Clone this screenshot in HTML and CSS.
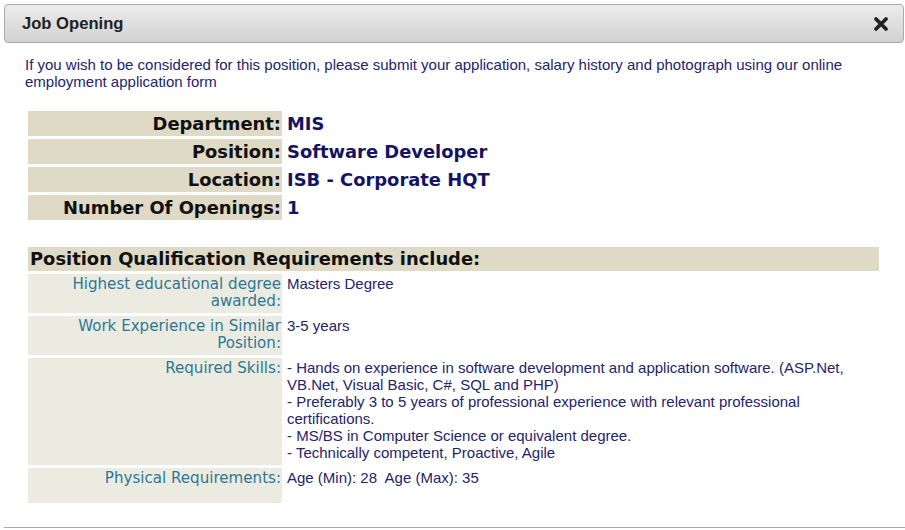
FILE: index.html
```html
<!DOCTYPE html>
<html lang="en">
<head>
    <meta charset="UTF-8">
    <title>Job Opening</title>
    <link rel="stylesheet" href="styles.css">
</head>
<body>
    <div class="dialog">
        <div class="titlebar">
            <span class="title">Job Opening</span>
            <span class="close-btn">
                <svg width="16" height="16" viewBox="0 0 16 16"><path d="M3 3 L13 13 M13 3 L3 13" stroke="#222" stroke-width="3.8" stroke-linecap="round"/></svg>
            </span>
        </div>
        <div class="content">
            <p class="intro">If you wish to be considered for this position, please submit your application, salary history and photograph using our online employment application form</p>
            <table class="job-table">
                <tr class="main">
                    <th>Department:</th>
                    <td>MIS</td>
                </tr>
                <tr class="main">
                    <th>Position:</th>
                    <td>Software Developer</td>
                </tr>
                <tr class="main">
                    <th>Location:</th>
                    <td>ISB - Corporate HQT</td>
                </tr>
                <tr class="main">
                    <th>Number Of Openings:</th>
                    <td>1</td>
                </tr>
                <tr class="spacer"><td colspan="2"></td></tr>
                <tr class="section">
                    <td colspan="2">Position Qualification Requirements include:</td>
                </tr>
                <tr class="req r-degree">
                    <th>Highest educational degree awarded:</th>
                    <td>Masters Degree</td>
                </tr>
                <tr class="req r-exp">
                    <th>Work Experience in Similar Position:</th>
                    <td>3-5 years</td>
                </tr>
                <tr class="req r-skills">
                    <th>Required Skills:</th>
                    <td>- Hands on experience in software development and application software. (ASP.Net, VB.Net, Visual Basic, C#, SQL and PHP)<br>- Preferably 3 to 5 years of professional experience with relevant professional certifications.<br>- MS/BS in Computer Science or equivalent degree.<br>- Technically competent, Proactive, Agile</td>
                </tr>
                <tr class="req r-phys">
                    <th>Physical Requirements:</th>
                    <td>Age (Min): 28&nbsp; Age (Max): 35</td>
                </tr>
            </table>
        </div>
        <div class="footer"></div>
    </div>
</body>
</html>
```

FILE: styles.css
```css
body {
    margin: 0;
    background: #fff;
    font-family: "Liberation Sans", Arial, sans-serif;
}
.dialog {
    padding: 4px 0 0 4px;
}
.titlebar {
    display: flex;
    align-items: center;
    justify-content: space-between;
    height: 37px;
    margin-right: 1px;
    padding: 0 14px 0 17px;
    border: 1px solid #aaa;
    border-radius: 4px;
    background: linear-gradient(#ececec, #d2d2d2);
}
.title {
    font-size: 16.6px;
    font-weight: bold;
    color: #222;
}
.close-btn {
    display: flex;
}
.content {
    padding: 13px 19px 0 21px;
}
.intro {
    margin: 0;
    font-size: 15px;
    line-height: 17px;
    color: #23236e;
}
.job-table {
    width: 857px;
    margin-top: 18px;
    border-spacing: 3px;
}
.job-table th {
    width: 251px;
    text-align: right;
    vertical-align: top;
}
.main th,
.main td,
.section td {
    height: 25px;
    padding: 0 1px 0 2px;
    font-family: "DejaVu Sans", Verdana, sans-serif;
    font-size: 17.9px;
    font-weight: bold;
    line-height: 25px;
}
.main th {
    background: #dedac6;
    color: #111;
}
.main td {
    color: #141464;
}
.spacer td {
    height: 21px;
    padding: 0;
}
.section td {
    height: 24px;
    line-height: 24px;
    background: #dedac6;
    color: #111;
}
.req th,
.req td {
    padding: 2px 1px 3px 2px;
    font-size: 15px;
    line-height: 17px;
    vertical-align: top;
}
.req th {
    font-family: "DejaVu Sans", Verdana, sans-serif;
    font-size: 15.1px;
    font-weight: normal;
    background: #ecebe2;
    color: #2b7896;
}
.req td {
    padding-top: 1px;
    padding-bottom: 4px;
    color: #23236e;
}
.r-phys th {
    height: 30px;
}
.footer {
    margin-top: 21px;
    border-top: 1px solid #aaa;
}
```
